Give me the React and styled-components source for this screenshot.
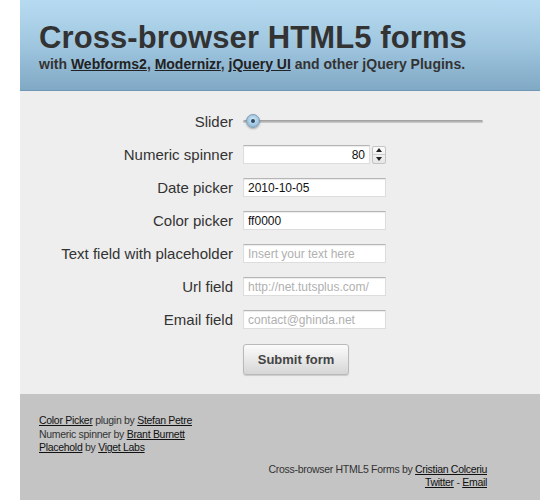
import styled, { createGlobalStyle } from "styled-components";

const GlobalStyle = createGlobalStyle`
  html, body {
    margin: 0;
    padding: 0;
    background: #ffffff;
  }
  body {
    font-family: "Liberation Sans", Arial, sans-serif;
    color: #333;
  }
`;

const Page = styled.div`
  width: 520px;
  margin-left: 20px;
`;

const Header = styled.header`
  height: 91px;
  box-sizing: border-box;
  padding: 20px 0 0 19px;
  background: linear-gradient(#b6dbf1, #a3c9e2 45%, #80a9c5);
  border-bottom: 1px solid #7097b3;
`;

const Title = styled.h1`
  margin: 0;
  font-size: 31px;
  line-height: 36px;
  font-weight: bold;
  color: #333;
  letter-spacing: 0.1px;
`;

const Subtitle = styled.p`
  margin: 0;
  font-size: 14px;
  line-height: 16px;
  font-weight: bold;
  color: #333;
`;

const HeadLink = styled.a`
  color: #222;
  text-decoration: underline;
`;

const Form = styled.form`
  display: grid;
  grid-template-columns: 213px 1fr;
  grid-template-rows: repeat(7, 33px) 39px;
  column-gap: 10px;
  align-items: center;
  padding: 14px 0 19px;
  background: #eeeeee;
`;

const Label = styled.label`
  text-align: right;
  font-size: 15px;
  color: #333;
`;

const Input = styled.input`
  box-sizing: border-box;
  width: 143px;
  height: 19px;
  padding: 0 4px;
  border: 1px solid #ddd;
  border-top-color: #b5b5b5;
  box-shadow: inset 0 1px 1px rgba(0, 0, 0, 0.08);
  background: #fff;
  font-family: "Liberation Sans", Arial, sans-serif;
  font-size: 12px;
  color: #111;
  outline: none;
  &::placeholder {
    color: #b0b0b0;
  }
`;

const SliderTrack = styled.div`
  position: relative;
  width: 240px;
  height: 3px;
  background: linear-gradient(#9a9a9a, #cfcfcf);
  border-radius: 2px;
`;

const SliderThumb = styled.div`
  position: absolute;
  left: 3px;
  top: -6px;
  width: 14px;
  height: 14px;
  box-sizing: border-box;
  border-radius: 50%;
  border: 1px solid #7e9db5;
  background: radial-gradient(circle at 50% 40%, #d8ecf8, #8fb9d8 75%);
  box-shadow: 0 1px 2px rgba(0, 0, 0, 0.3);
  &::after {
    content: "";
    position: absolute;
    left: 4px;
    top: 4px;
    width: 4px;
    height: 4px;
    border-radius: 50%;
    background: #2c4a63;
  }
`;

const Spinner = styled.div`
  display: flex;
  align-items: center;
  gap: 2px;
`;

const NumberInput = styled(Input)`
  width: 127px;
  text-align: right;
`;

const SpinButtons = styled.div`
  display: flex;
  flex-direction: column;
  width: 14px;
  height: 18px;
  box-sizing: border-box;
  border: 1px solid #c4c4c4;
  border-radius: 2px;
  background: linear-gradient(#fbfbfb, #e6e6e6);
`;

const SpinButton = styled.div`
  flex: 1;
  display: flex;
  align-items: center;
  justify-content: center;
  &:first-child {
    border-bottom: 1px solid #cdcdcd;
  }
  &::before {
    content: "";
    border-left: 3px solid transparent;
    border-right: 3px solid transparent;
    ${(p) =>
      p.$up
        ? "border-bottom: 4px solid #222;"
        : "border-top: 4px solid #222;"}
  }
`;

const SubmitButton = styled.button`
  grid-column: 2;
  align-self: end;
  width: 106px;
  height: 31px;
  border: 1px solid #b9b9b9;
  border-radius: 3px;
  background: linear-gradient(#fbfbfb, #d6d6d6);
  box-shadow: 0 1px 1px rgba(0, 0, 0, 0.15);
  font-family: "Liberation Sans", Arial, sans-serif;
  font-size: 13px;
  font-weight: bold;
  color: #444;
`;

const Footer = styled.footer`
  background: #c4c4c4;
  padding: 20px 53px 12px 19px;
  font-size: 10.5px;
  letter-spacing: -0.3px;
  line-height: 13.5px;
  color: #333;
  min-height: 107px;
  box-sizing: border-box;
`;

const FootLink = styled.a`
  color: #111;
  text-decoration: underline;
`;

const Credits = styled.div`
  display: flex;
  flex-direction: column;
`;

const Signature = styled.div`
  margin-top: 8px;
  text-align: right;
`;

export default function App() {
  return (
    <>
      <GlobalStyle />
      <Page>
        <Header>
          <Title>Cross-browser HTML5 forms</Title>
          <Subtitle>
            with <HeadLink href="#">Webforms2</HeadLink>,{" "}
            <HeadLink href="#">Modernizr</HeadLink>,{" "}
            <HeadLink href="#">jQuery UI</HeadLink> and other jQuery Plugins.
          </Subtitle>
        </Header>
        <Form onSubmit={(e) => e.preventDefault()}>
          <Label>Slider</Label>
          <SliderTrack>
            <SliderThumb />
          </SliderTrack>

          <Label>Numeric spinner</Label>
          <Spinner>
            <NumberInput defaultValue="80" />
            <SpinButtons>
              <SpinButton $up />
              <SpinButton />
            </SpinButtons>
          </Spinner>

          <Label>Date picker</Label>
          <Input defaultValue="2010-10-05" />

          <Label>Color picker</Label>
          <Input defaultValue="ff0000" />

          <Label>Text field with placeholder</Label>
          <Input placeholder="Insert your text here" />

          <Label>Url field</Label>
          <Input placeholder="http://net.tutsplus.com/" />

          <Label>Email field</Label>
          <Input placeholder="contact@ghinda.net" />

          <SubmitButton type="submit">Submit form</SubmitButton>
        </Form>
        <Footer>
          <Credits>
            <span>
              <FootLink href="#">Color Picker</FootLink> plugin by{" "}
              <FootLink href="#">Stefan Petre</FootLink>
            </span>
            <span>
              Numeric spinner by <FootLink href="#">Brant Burnett</FootLink>
            </span>
            <span>
              <FootLink href="#">Placehold</FootLink> by{" "}
              <FootLink href="#">Viget Labs</FootLink>
            </span>
          </Credits>
          <Signature>
            Cross-browser HTML5 Forms by{" "}
            <FootLink href="#">Cristian Colceriu</FootLink>
            <br />
            <FootLink href="#">Twitter</FootLink> -{" "}
            <FootLink href="#">Email</FootLink>
          </Signature>
        </Footer>
      </Page>
    </>
  );
}
